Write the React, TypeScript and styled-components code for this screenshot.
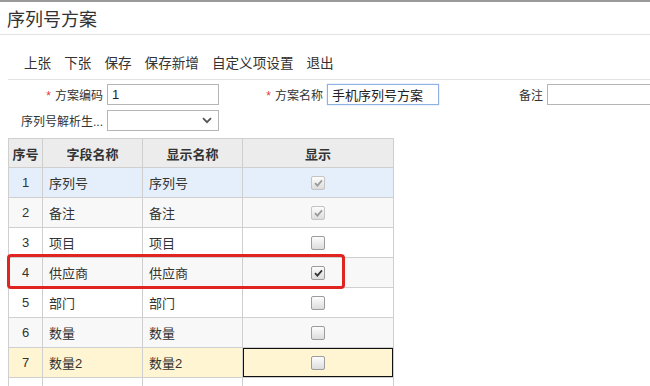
import React from 'react';
import styled, { createGlobalStyle } from 'styled-components';

const GlobalStyle = createGlobalStyle`
  html, body {
    margin: 0;
    padding: 0;
    background: #fff;
    font-family: "Liberation Sans", "Noto Sans CJK SC", sans-serif;
    color: #333;
    overflow: hidden;
  }
`;

const Page = styled.div`
  width: 650px;
  height: 386px;
  border-top: 2px solid #9a9a9a;
  box-sizing: border-box;
  overflow: hidden;
`;

const TitleBar = styled.div`
  height: 32px;
  border-bottom: 1px solid #e3e3e3;
  padding-left: 7px;
  display: flex;
  align-items: center;
  font-size: 18px;
  color: #333;
`;

const Toolbar = styled.div`
  display: flex;
  align-items: flex-end;
  gap: 13px;
  height: 44px;
  padding: 0 0 6px 24px;
  box-sizing: border-box;
`;

const ToolButton = styled.span`
  font-size: 13.6px;
  color: #333;
  line-height: 18px;
`;

const Divider = styled.div`
  margin-left: 8px;
  border-top: 1px solid #e3e3e3;
`;

const Form = styled.div`
  display: flex;
  flex-direction: column;
  gap: 5px;
  padding-top: 4px;
`;

const FormRow = styled.div`
  display: flex;
  align-items: center;
`;

const Field = styled.div<{ $labelWidth: number }>`
  display: flex;
  align-items: center;
  & > label {
    width: ${p => p.$labelWidth}px;
    text-align: right;
    font-size: 12px;
    color: #333;
    padding-right: 4px;
    box-sizing: border-box;
    white-space: nowrap;
  }
`;

const Star = styled.span`
  color: #e4393c;
  margin-right: 4px;
`;

const TextInput = styled.input<{ $focus?: boolean; $width: number }>`
  width: ${p => p.$width}px;
  height: 21px;
  box-sizing: border-box;
  border: 1px solid ${p => (p.$focus ? '#8fb1e3' : '#b5b5b5')};
  box-shadow: ${p => (p.$focus ? '0 0 1px #8fb1e3' : 'none')};
  padding: 0 4px;
  font-size: 13px;
  font-family: "Liberation Sans", "Noto Sans CJK SC", sans-serif;
  color: #222;
  outline: none;
  margin: 0;
`;

const SelectBox = styled.div`
  width: 112px;
  height: 21px;
  box-sizing: border-box;
  border: 1px solid #b5b5b5;
  display: flex;
  align-items: center;
  justify-content: flex-end;
  padding-right: 6px;
`;

const TableWrap = styled.div`
  position: relative;
  margin: 7px 0 0 8px;
  width: 385px;
`;

const Grid = styled.table`
  border-collapse: collapse;
  table-layout: fixed;
  width: 385px;
  font-size: 13px;
  font-family: "Liberation Sans", "Noto Sans CJK SC", sans-serif;
`;

const Th = styled.th`
  height: 28px;
  background: #ececec;
  border: 1px solid #cfcfcf;
  font-weight: bold;
  color: #333;
  text-align: center;
  padding: 0;
`;

const Tr = styled.tr<{ $bg: string }>`
  background: ${p => p.$bg};
`;

const Td = styled.td<{ $center?: boolean; $active?: boolean }>`
  height: 29px;
  border: 1px solid #cfcfcf;
  box-shadow: ${p => (p.$active ? 'inset 0 0 0 1px #111' : 'none')};
  text-align: ${p => (p.$center ? 'center' : 'left')};
  padding: 0 0 0 ${p => (p.$center ? 0 : 6)}px;
  color: #333;
  white-space: nowrap;
`;

const Box = styled.span<{ $disabled?: boolean }>`
  display: inline-flex;
  align-items: center;
  justify-content: center;
  width: 12px;
  height: 12px;
  border: 1px solid ${p => (p.$disabled ? '#c4c4c4' : '#9c9c9c')};
  border-radius: 2px;
  background: linear-gradient(#fdfdfd, #dcdcdc);
  vertical-align: middle;
`;

const Highlight = styled.div`
  position: absolute;
  left: -1px;
  top: 116px;
  width: 338px;
  height: 35px;
  border: 3px solid #e02520;
  border-radius: 4px;
  box-sizing: border-box;
  pointer-events: none;
`;

const Check = ({ checked, disabled }: { checked?: boolean; disabled?: boolean }) => (
  <Box $disabled={disabled}>
    {checked && (
      <svg width="9" height="8" viewBox="0 0 9 8">
        <path d="M1 4.2 L3.4 6.6 L8 1.4" fill="none" stroke={disabled ? '#9a9a9a' : '#333'} strokeWidth="1.8" />
      </svg>
    )}
  </Box>
);

const rows = [
  { no: 1, field: '序列号', name: '序列号', checked: true, disabled: true, bg: '#e5effc' },
  { no: 2, field: '备注', name: '备注', checked: true, disabled: true, bg: '#f8f8f8' },
  { no: 3, field: '项目', name: '项目', checked: false, bg: '#ffffff' },
  { no: 4, field: '供应商', name: '供应商', checked: true, bg: '#f8f8f8' },
  { no: 5, field: '部门', name: '部门', checked: false, bg: '#ffffff' },
  { no: 6, field: '数量', name: '数量', checked: false, bg: '#f8f8f8' },
  { no: 7, field: '数量2', name: '数量2', checked: false, bg: '#fff5d2', active: true },
  { no: 8, field: '', name: '', checked: false, bg: '#ffffff', empty: true },
];

const tools = ['上张', '下张', '保存', '保存新增', '自定义项设置', '退出'];

export default function App() {
  return (
    <Page>
      <GlobalStyle />
      <TitleBar>序列号方案</TitleBar>
      <Toolbar>
        {tools.map(t => (
          <ToolButton key={t}>{t}</ToolButton>
        ))}
      </Toolbar>
      <Divider />
      <Form>
        <FormRow>
          <Field $labelWidth={107}>
            <label><Star>*</Star>方案编码</label>
            <TextInput $width={112} defaultValue="1" readOnly />
          </Field>
          <Field $labelWidth={108}>
            <label><Star>*</Star>方案名称</label>
            <TextInput $width={112} $focus defaultValue="手机序列号方案" readOnly />
          </Field>
          <Field $labelWidth={108}>
            <label>备注</label>
            <TextInput $width={110} readOnly />
          </Field>
        </FormRow>
        <FormRow>
          <Field $labelWidth={107}>
            <label>序列号解析生...</label>
            <SelectBox>
              <svg width="10" height="7" viewBox="0 0 10 7">
                <path d="M1 1.2 L5 5.2 L9 1.2" fill="none" stroke="#555" strokeWidth="1.8" />
              </svg>
            </SelectBox>
          </Field>
        </FormRow>
      </Form>
      <TableWrap>
        <Grid>
          <colgroup>
            <col style={{ width: 34 }} />
            <col style={{ width: 100 }} />
            <col style={{ width: 100 }} />
            <col style={{ width: 151 }} />
          </colgroup>
          <thead>
            <tr>
              <Th>序号</Th>
              <Th>字段名称</Th>
              <Th>显示名称</Th>
              <Th>显示</Th>
            </tr>
          </thead>
          <tbody>
            {rows.map(r => (
              <Tr key={r.no} $bg={r.bg}>
                <Td $center>{r.empty ? '' : r.no}</Td>
                <Td>{r.field}</Td>
                <Td>{r.name}</Td>
                <Td $center $active={r.active}>
                  {!r.empty && <Check checked={r.checked} disabled={r.disabled} />}
                </Td>
              </Tr>
            ))}
          </tbody>
        </Grid>
        <Highlight />
      </TableWrap>
    </Page>
  );
}
